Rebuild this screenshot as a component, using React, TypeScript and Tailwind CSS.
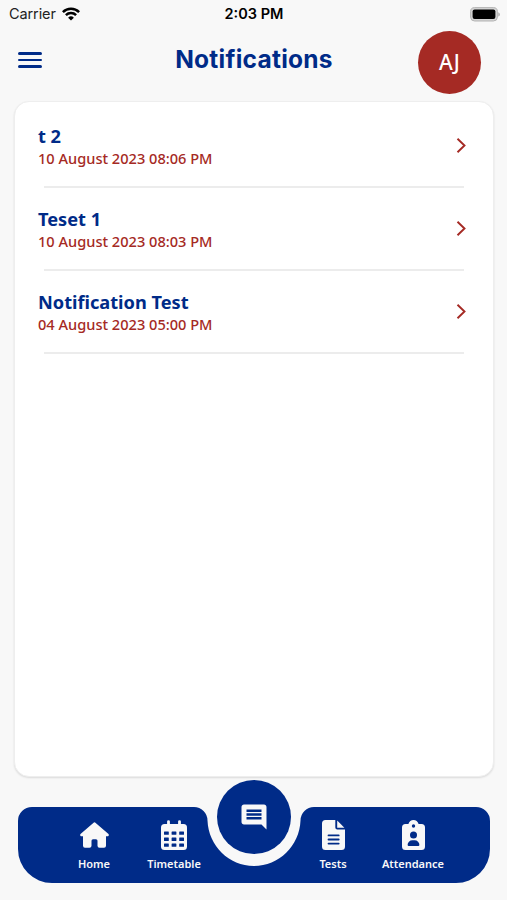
import { MdComment } from "react-icons/md";

const notifications = [
  { title: "t 2", date: "10 August 2023 08:06 PM" },
  { title: "Teset 1", date: "10 August 2023 08:03 PM" },
  { title: "Notification Test", date: "04 August 2023 05:00 PM" },
];

function WifiIcon() {
  return (
    <svg width="18" height="14" viewBox="0 0 18 14" fill="none" stroke="#000" strokeWidth="2.5">
      <path d="M0.9 5.1a11.5 11.5 0 0 1 16.2 0" />
      <path d="M3.9 8.2a7.2 7.2 0 0 1 10.2 0" />
      <path d="M9 13.6 6.1 10.7a4.1 4.1 0 0 1 5.8 0Z" fill="#000" stroke="none" />
    </svg>
  );
}

function BatteryIcon() {
  return (
    <svg width="30" height="15" viewBox="0 0 30 15">
      <rect x="0.6" y="0.6" width="26.8" height="13.4" rx="4" fill="#d4d4d4" stroke="#b4b4b4" />
      <rect x="2.6" y="2.6" width="22.8" height="9.4" rx="2" fill="#000" />
      <path d="M28.3 5.2c2 .8 2 3.6 0 4.4Z" fill="#a8a8a8" />
    </svg>
  );
}

function HomeIcon() {
  return (
    <svg width="29" height="30" viewBox="0 0 29 30">
      <path
        fill="currentColor"
        d="M13.3 2.9a1.8 1.8 0 0 1 2.4 0L28.2 13.7c1.2 1.1.5 2.5-.8 2.5H26v9.5a2 2 0 0 1-2 2H19.5a2 2 0 0 1-2-2v-5a1.500 1.500 0 0 0-1.500-1.500h-3a1.500 1.500 0 0 0-1.500 1.500v5a2 2 0 0 1-2 2H5a2 2 0 0 1-2-2v-9.500H1.600c-1.300 0-2-1.400-.8-2.500Z"
      />
    </svg>
  );
}

function CalendarIcon() {
  return (
    <svg width="26" height="30" viewBox="0 0 26 30">
      <path d="M7.5 1.6V6M18.5 1.6V6" stroke="currentColor" strokeWidth="2.8" strokeLinecap="round" />
      <rect y="4" width="26" height="26" rx="3.5" fill="currentColor" />
      <g fill="#002b88">
        {[11.5, 17.6, 23.5].map((y) =>
          [3, 10.6, 18.2].map((x) => (
            <rect key={`${x}-${y}`} x={x} y={y} width="4.8" height="3.3" rx="0.5" />
          ))
        )}
      </g>
    </svg>
  );
}

function FileIcon() {
  return (
    <svg width="23" height="30" viewBox="0 0 23 30">
      <path
        fill="currentColor"
        d="M3.5 0H13.3V7.5A2 2 0 0 0 15.3 9.5H23V26.5A3.5 3.5 0 0 1 19.5 30H3.5A3.5 3.5 0 0 1 0 26.5V3.5A3.5 3.5 0 0 1 3.5 0Z"
      />
      <path fill="currentColor" d="M15.2 0.4 22.4 7.7H15.2Z" />
      <path
        d="M6.5 15.4h10.2M6.5 19.5h10.2M6.5 23.6h10.2"
        stroke="#002b88"
        strokeWidth="1.8"
        strokeLinecap="round"
      />
    </svg>
  );
}

function BadgeIcon() {
  return (
    <svg width="23" height="30" viewBox="0 0 23 30">
      <path
        fill="currentColor"
        d="M3.5 4H6.4C7.3 1.6 9 0 11.5 0S15.7 1.6 16.6 4H19.5A3.5 3.5 0 0 1 23 7.5V26.5A3.5 3.5 0 0 1 19.5 30H3.5A3.5 3.5 0 0 1 0 26.5V7.5A3.5 3.5 0 0 1 3.5 4Z"
      />
      <g fill="#002b88">
        <circle cx="11.5" cy="6" r="1.7" />
        <circle cx="11.5" cy="15" r="3.5" />
        <path d="M5.6 25.1a4.8 4.8 0 0 1 4.8-4.9h2.2a4.8 4.8 0 0 1 4.8 4.9.8.8 0 0 1-.8.8H6.4a.8.8 0 0 1-.8-.8Z" />
      </g>
    </svg>
  );
}

function TabBar() {
  return (
    <nav className="relative mx-[18px] mt-[30px] h-[76px] w-[472px] text-[#f8f8f8]">
      <svg className="absolute inset-0" width="472" height="76" viewBox="0 0 472 76">
        <path
          d="M14 0H176a13.5 13.5 0 0 1 13.5 13.5C190.5 39 211 59 236 59S281.5 39 282.5 13.5A13.5 13.5 0 0 1 296 0H458a14 14 0 0 1 14 14V42a34 34 0 0 1-34 34H34A34 34 0 0 1 0 42V14A14 14 0 0 1 14 0Z"
          fill="#002b88"
        />
      </svg>
      <div className="relative flex h-full justify-between pr-[37px] pl-9 pt-[13px] text-[11px] leading-[15px] font-semibold">
        <div className="flex">
          <a className="flex w-20 flex-col items-center gap-[6px]">
            <HomeIcon />
            Home
          </a>
          <a className="flex w-20 flex-col items-center gap-[6px]">
            <CalendarIcon />
            Timetable
          </a>
        </div>
        <div className="flex">
          <a className="flex w-20 flex-col items-center gap-[6px]">
            <FileIcon />
            Tests
          </a>
          <a className="flex w-20 flex-col items-center gap-[6px]">
            <BadgeIcon />
            Attendance
          </a>
        </div>
      </div>
      <button className="absolute -top-[27px] left-[199px] flex size-[74px] items-center justify-center rounded-full bg-[#002b88]">
        <MdComment className="size-[30px]" />
      </button>
    </nav>
  );
}

export default function App() {
  return (
    <div className="h-[900px] w-[507px] overflow-hidden bg-[#f8f8f8] font-['Noto_Sans',sans-serif]">
      <div className="flex h-7 items-center justify-between pr-[7px] pl-[9px] font-['Inter',sans-serif] text-[14.5px] text-[#222]">
        <div className="flex w-[199px] items-center gap-[6px]">
          <span className="tracking-[-0.1px]">Carrier</span>
          <WifiIcon />
        </div>
        <span className="font-semibold text-black">2:03 PM</span>
        <div className="flex w-[200px] justify-end">
          <BatteryIcon />
        </div>
      </div>

      <header className="flex h-[73px] items-start justify-between pr-[26px] pl-[18px]">
        <button className="mt-[24px] flex w-[72px] flex-col gap-[4px]">
          <span className="h-[2.5px] w-6 rounded-full bg-[#002b88]" />
          <span className="h-[2.5px] w-6 rounded-full bg-[#002b88]" />
          <span className="h-[2.5px] w-6 rounded-full bg-[#002b88]" />
        </button>
        <h1 className="mt-[15px] font-['Inter',sans-serif] text-[24.5px] leading-8 font-bold tracking-[0.25px] text-[#002b88]">
          Notifications
        </h1>
        <div className="mt-[3px] flex size-[63px] items-center justify-center rounded-full bg-[#a52a24] pt-px text-[21px] font-medium text-white">
          AJ
        </div>
      </header>

      <main className="mx-[14px] h-[676px] w-[480px] rounded-[15px] border border-[#eeeeee] bg-white shadow-[0_1px_2px_rgba(0,0,0,0.12)]">
        {notifications.map((item) => (
          <div key={item.title} className="mb-px flex h-[82px] flex-col">
            <div className="flex grow items-center justify-between pt-[3px] pr-[27px] pl-[23px]">
              <div>
                <h2 className="text-[18.2px] leading-6 font-bold text-[#002b88]">{item.title}</h2>
                <p className="text-[14.6px] leading-5 font-medium text-[#a52a24]">{item.date}</p>
              </div>
              <svg width="10" height="16" viewBox="0 0 10 16" fill="none" stroke="#a52a24" strokeWidth="1.9">
                <path d="m1.5 .7 7 6.8-7 6.8" />
              </svg>
            </div>
            <hr className="mx-[29px] mb-[-4px] border-t-2 border-[#ececec]" />
          </div>
        ))}
      </main>

      <TabBar />
    </div>
  );
}
